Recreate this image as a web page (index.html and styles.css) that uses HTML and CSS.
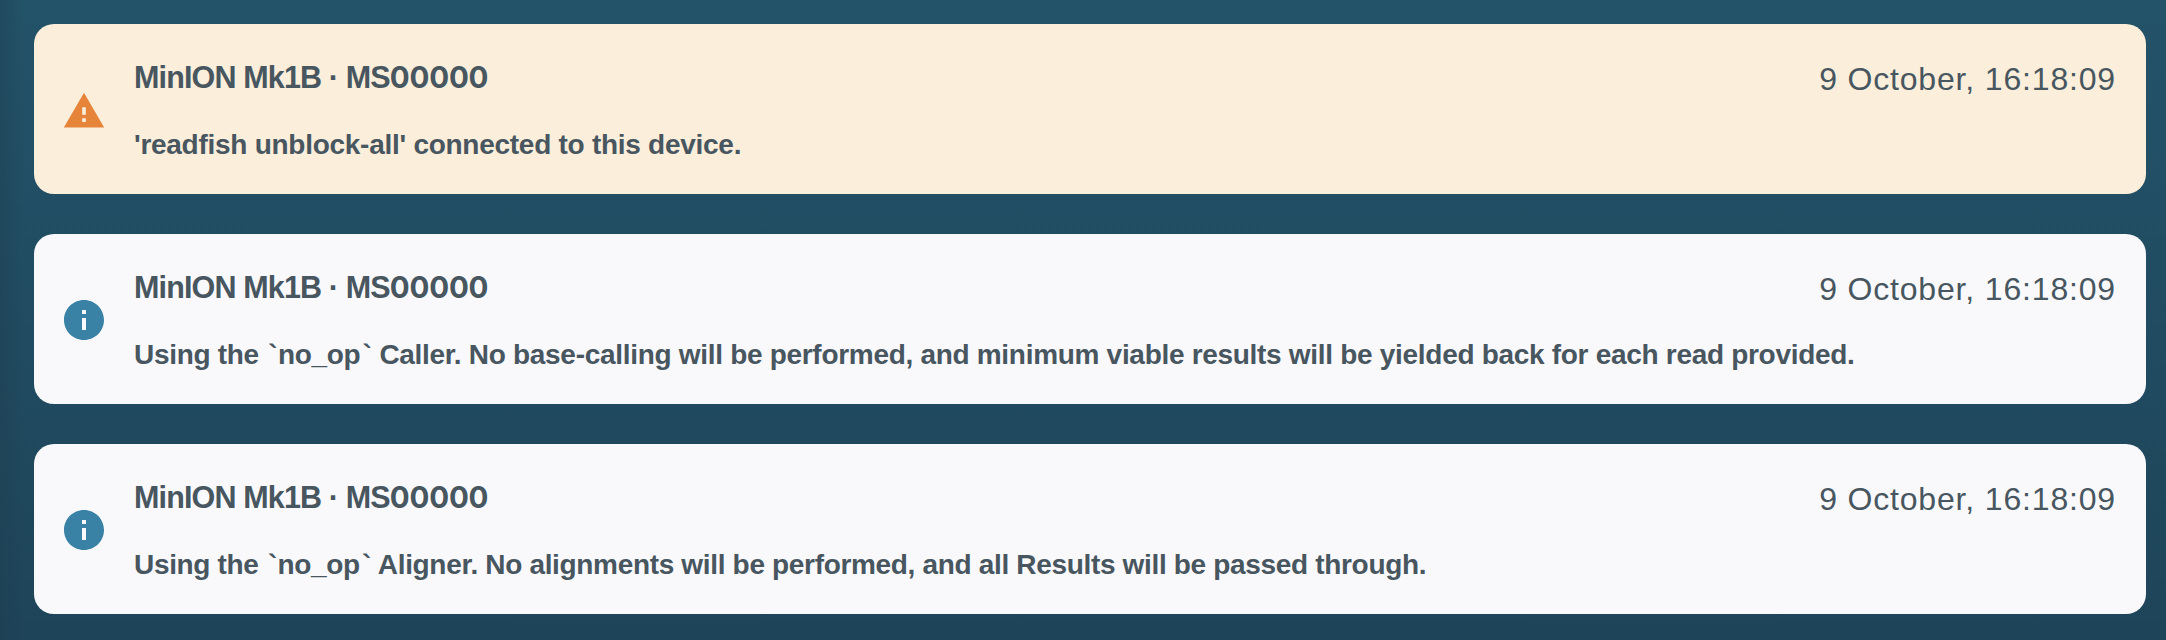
FILE: index.html
```html
<!DOCTYPE html>
<html lang="en">
<head>
<meta charset="utf-8">
<title>Device messages</title>
<link rel="stylesheet" href="styles.css">
</head>
<body>
<main class="messages">
  <article class="card warning">
    <svg class="icon" viewBox="0 0 24 24"><path d="M1 21h22L12 2 1 21zm12-3h-2v-2h2v2zm0-4h-2v-4h2v4z"/></svg>
    <div class="content">
      <header class="head"><h2 class="title">MinION Mk1B · MS<span class="zeros">00000</span></h2><time class="time">9 October, 16:18:09</time></header>
      <p class="text">'readfish unblock-all' connected to this device.</p>
    </div>
  </article>
  <article class="card info">
    <svg class="icon" viewBox="0 0 24 24"><path d="M12 2C6.480 2 2 6.480 2 12s4.480 10 10 10 10-4.480 10-10S17.520 2 12 2zm1 15h-2v-6h2v6zm0-8h-2V7h2v2z"/></svg>
    <div class="content">
      <header class="head"><h2 class="title">MinION Mk1B · MS<span class="zeros">00000</span></h2><time class="time">9 October, 16:18:09</time></header>
      <p class="text caller">Using the <span class="tick">`</span>no_op<span class="tick">`</span> Caller. No base-calling will be performed, and minimum viable results will be yielded back for each read provided.</p>
    </div>
  </article>
  <article class="card info">
    <svg class="icon" viewBox="0 0 24 24"><path d="M12 2C6.480 2 2 6.480 2 12s4.480 10 10 10 10-4.480 10-10S17.520 2 12 2zm1 15h-2v-6h2v6zm0-8h-2V7h2v2z"/></svg>
    <div class="content">
      <header class="head"><h2 class="title">MinION Mk1B · MS<span class="zeros">00000</span></h2><time class="time">9 October, 16:18:09</time></header>
      <p class="text aligner">Using the <span class="tick">`</span>no_op<span class="tick">`</span> Aligner. No alignments will be performed, and all Results will be passed through.</p>
    </div>
  </article>
</main>
</body>
</html>
```
FILE: styles.css
```css
* { box-sizing: border-box; }
body { margin: 0; font-family: "Liberation Sans", Arial, sans-serif; color: #485660; }
.messages {
  height: 640px;
  padding: 24px 20px 0 34px;
  display: flex;
  flex-direction: column;
  gap: 40px;
  background: linear-gradient(90deg, rgba(31, 60, 78, .4), rgba(31, 60, 78, 0) 24px), linear-gradient(#235369, #1e4459);
  overflow: hidden;
}
.card { height: 170px; flex: none; border-radius: 20px; padding: 33px 30px 0 26px; display: flex; gap: 26px; background: #f9f9fc; }
.warning { background: #fbeedb; }
.icon { width: 48px; height: 48px; margin-top: 29px; flex: none; fill: #3981a5; }
.warning .icon { width: 44px; height: 44px; margin: 32px 2px 0; fill: #e6853a; }
.content { flex: 1; }
.head { display: flex; justify-content: space-between; height: 42px; }
.title { margin: 0; font-size: 30.5px; line-height: 41px; letter-spacing: -0.85px; }
.zeros { font-family: Inter, "Liberation Sans", sans-serif; font-size: 29.5px; font-weight: 700; line-height: 1; letter-spacing: -0.2px; }
.time { font-size: 32px; line-height: 44px; letter-spacing: 0.83px; }
.text { margin: 26px 0 0; font-size: 28px; line-height: 40px; font-weight: 700; letter-spacing: -0.27px; white-space: nowrap; }
.caller { letter-spacing: -0.3px; }
.aligner { letter-spacing: -0.33px; }
.tick { margin: 0 0.5px 0 2px; }
```
